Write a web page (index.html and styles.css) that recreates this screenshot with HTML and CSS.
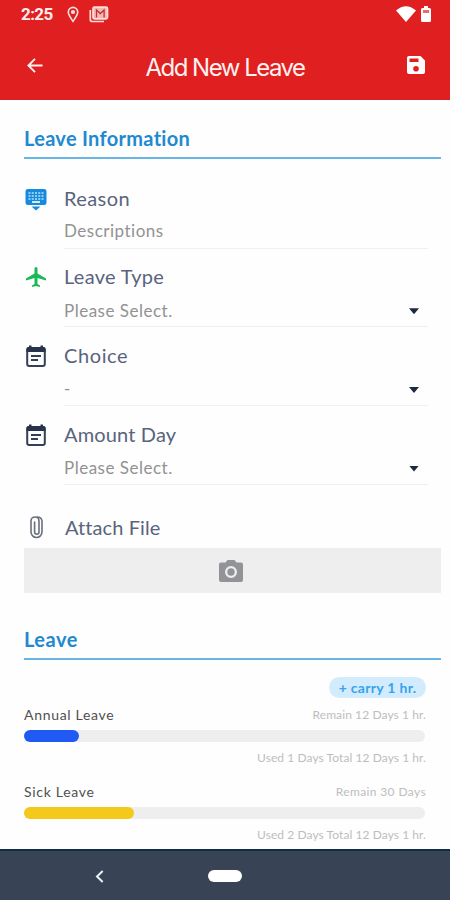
FILE: index.html
```html
<!DOCTYPE html>
<html lang="en">
<head>
<meta charset="utf-8">
<title>Add New Leave</title>
<link rel="stylesheet" href="styles.css">
</head>
<body>
<div class="screen">
  <header class="header">
    <div class="status">
      <span class="time">2:25</span>
      <svg class="pin" width="12" height="17" viewBox="0 0 12 17" fill="none" stroke="#ffe0dc" stroke-width="1.6"><path d="M6 15.4C3.6 12 1.3 9 1.3 6.1a4.7 4.7 0 0 1 9.4 0C10.700 9 8.400 12 6 15.400Z"/><circle cx="6" cy="6" r="1.300" fill="#ffe0dc"/></svg>
      <svg class="mail" width="20" height="17" viewBox="0 0 20 17" fill="none" stroke="#ffdcd8" stroke-width="1.700"><path d="M1.300 4v9.500q0 2 2 2H15"/><rect x="4" y="1.200" width="14.500" height="11.600" rx="1.500" fill="#f9b5b0"/><path d="M7.500 11.500V4l3.800 3.500L15.100 4v7.500" stroke="#b83535" stroke-width="1.300"/></svg>
      <svg class="wifi" width="20" height="16" viewBox="0 0 20 16"><path d="M0 4.500Q10-4 20 4.500L10 16Z" fill="#fff"/></svg>
      <svg class="battery" width="10" height="16" viewBox="0 0 10 16"><path d="M3 0h4v2h1.500q1.500 0 1.500 1.500v11q0 1.500-1.500 1.500h-7Q0 16 0 14.500v-11Q0 2 1.500 2H3Z" fill="#fff"/><path d="M2 4h6v3H2Z" fill="#e96a67"/></svg>
    </div>
    <div class="toolbar">
      <svg class="back" width="16" height="15" viewBox="0 0 16 15" fill="none" stroke="#fff2ee" stroke-width="1.900"><path d="M15.500 7.500H1.600M8 .9 1.400 7.500 8 14.100"/></svg>
      <h1>Add New Leave</h1>
      <svg class="save" width="18" height="18" viewBox="0 0 18 18"><path fill="#fff" fill-rule="evenodd" d="M2 0h11.500L18 4.500V16q0 2-2 2H2q-2 0-2-2V2Q0 0 2 0ZM2.500 2.500v3.500h9V2.500ZM9 10a2.800 2.800 0 1 0 0 5.600A2.800 2.800 0 1 0 9 10Z"/></svg>
    </div>
  </header>

  <main class="content">
    <h2 class="info-title"><span>Leave Information</span></h2>
    <section class="fields">
      <div class="field">
        <svg class="icon" width="24" height="24" viewBox="0 0 24 24"><path d="M4 2h16q2.500 0 2.500 2.500v11Q22.500 18 20 18H4q-2.500 0-2.500-2.500v-11Q1.500 2 4 2ZM7.500 19.500h9L12 23.500Z" fill="#168bdd"/><path d="M4.500 6h15M4.500 9h15M4.500 12h15" stroke="#8dcdf3" stroke-width="2" stroke-dasharray="2 1.250"/><path d="M8 15h8" stroke="#e6f6ff" stroke-width="1.800"/></svg>
        <div class="label reason">Reason</div>
        <div class="value descriptions">Descriptions</div>
      </div>
      <div class="field">
        <svg class="icon" width="24" height="24" viewBox="0 0 24 24"><path fill="#18b957" d="M22 15.500v-2l-8.500-5V3.500a1.500 1.500 0 0 0-3 0v5L2 13.500v2l8.500-2.500v6L8 20.500V22l4-1 4 1v-1.500L13.500 19v-6Z"/></svg>
        <div class="label type">Leave Type</div>
        <div class="value select"><span>Please Select.</span><i class="caret"></i></div>
      </div>
      <div class="field">
        <svg class="icon" width="24" height="24" viewBox="0 0 24 24"><rect x="3.200" y="4" width="17.600" height="18" rx="2" fill="none" stroke="#344057" stroke-width="2"/><path d="M2.500 8V5Q2.500 3 4.500 3H5V1.500h2.500V3h9V1.500H19V3h.5q2 0 2 2v3Z" fill="#27334b"/><path d="M7 12h10M7 16h7" stroke="#344057" stroke-width="1.800"/></svg>
        <div class="label choice">Choice</div>
        <div class="value select"><span>-</span><i class="caret"></i></div>
      </div>
      <div class="field">
        <svg class="icon" width="24" height="24" viewBox="0 0 24 24"><rect x="3.200" y="4" width="17.600" height="18" rx="2" fill="none" stroke="#344057" stroke-width="2"/><path d="M2.500 8V5Q2.500 3 4.500 3H5V1.500h2.500V3h9V1.500H19V3h.5q2 0 2 2v3Z" fill="#27334b"/><path d="M7 12h10M7 16h7" stroke="#344057" stroke-width="1.800"/></svg>
        <div class="label amount">Amount Day</div>
        <div class="value select"><span>Please Select.</span><i class="caret"></i></div>
      </div>
    </section>
    <div class="attach">
      <svg class="clip" width="24" height="26" viewBox="0 0 24 26" fill="none" stroke="#69707d" stroke-width="1.600" stroke-linecap="round"><path d="M18 7v11a5.500 5.500 0 0 1-11 0V7a4 4 0 0 1 8 0v11a2.200 2.200 0 0 1-4.400 0V8M18 7a4.500 4.500 0 0 0-5-4"/></svg>
      <span>Attach File</span>
    </div>
    <div class="upload"><svg width="24" height="22" viewBox="0 0 24 22"><path fill="#929396" fill-rule="evenodd" d="M8.500 0h7l2 2.500H22q2 0 2 2V20q0 2-2 2H2q-2 0-2-2V4.500q0-2 2-2h4.500ZM12 6a6 6 0 1 0 0 12A6 6 0 1 0 12 6Z"/><circle cx="12" cy="12" r="3.700" fill="#929396"/></svg></div>

    <h2 class="leave-title"><span>Leave</span></h2>
    <section class="usage">
      <div class="badge"><span>+ carry 1 hr.</span></div>
      <div class="balance">
        <div class="row"><span class="name annual">Annual Leave</span><span class="note remain">Remain 12 Days 1 hr.</span></div>
        <div class="track"><div class="fill blue"></div></div>
        <div class="used"><span class="note">Used 1 Days Total 12 Days 1 hr.</span></div>
      </div>
      <div class="balance">
        <div class="row"><span class="name">Sick Leave</span><span class="note remain-sick">Remain 30 Days</span></div>
        <div class="track"><div class="fill yellow"></div></div>
        <div class="used"><span class="note">Used 2 Days Total 12 Days 1 hr.</span></div>
      </div>
    </section>
  </main>
  <nav class="nav">
    <svg class="nav-back" width="9" height="13" viewBox="0 0 9 13" fill="none" stroke="#eaf0f8" stroke-width="2"><path d="M7.700 1 2 6.500l5.700 5.500"/></svg>
    <div class="home"></div>
  </nav>
</div>
</body>
</html>
```
FILE: styles.css
```css
* { box-sizing: border-box; }
body { margin: 0; font-family: Lato, "Liberation Sans", sans-serif; font-variant-ligatures: none; background: #fefefe; }
svg { display: block; flex: none; }
h1, h2 { margin: 0; }
.screen { width: 450px; height: 900px; display: flex; flex-direction: column; overflow: hidden; }
.header { height: 100px; flex: none; background: #e01f21; color: #fff; }
.status { height: 28px; display: flex; align-items: center; padding: 0 19px 0 21px; }
.time { font: 700 17px/30px Roboto, sans-serif; width: 46px; letter-spacing: -.6px; color: #ffeeeb; }
.mail { margin-left: 10px; }
.wifi { margin-left: auto; margin-right: 5px; }
.toolbar { height: 72px; display: flex; align-items: center; padding: 2px 25px 0 27px; }
h1 { flex: 1; text-align: center; font: 400 24px/40px Inter, sans-serif; letter-spacing: -1.5px; padding-top: 5px; color: #fff1ee; }
.content { height: 749px; padding: 0 9px 0 24px; }
h2 { font-size: 20px; font-weight: 700; letter-spacing: .3px; color: #2189d0; border-bottom: 2px solid #68b6e6; white-space: nowrap; }
.info-title { height: 58.500px; padding-top: 18px; line-height: 40px; }
.fields { padding-top: 25px; }
.field { height: 78.700px; display: grid; grid-template-columns: 40px 364px; grid-template-rows: 29px 36px; }
.icon { margin-top: 3px; }
.label { font-size: 20px; line-height: 28px; letter-spacing: .3px; color: #59647c; white-space: nowrap; }
.reason { letter-spacing: .4px; }
.choice { letter-spacing: .6px; }
.amount { letter-spacing: .15px; }
.value { grid-column: 2; border-bottom: 1px solid #efeff1; font-size: 17px; line-height: 36px; letter-spacing: .5px; color: #929292; white-space: nowrap; }
.select { display: flex; align-items: center; justify-content: space-between; padding-top: 4px; }
.caret { width: 10px; height: 6px; margin: 1px 9px 0 0; background: #1d2841; clip-path: polygon(0 0, 100% 0, 50% 100%); }
.attach { height: 50px; padding-top: 7px; display: flex; gap: 17px; align-items: center; font-size: 20px; line-height: 30px; letter-spacing: .1px; color: #59647c; }
.upload { height: 45px; background: #eee; display: flex; align-items: center; justify-content: center; padding-right: 3px; }
.leave-title { height: 66.500px; padding-top: 26px; line-height: 40px; letter-spacing: .5px; }
.usage { padding-top: 17px; width: 402px; }
.badge { width: 97px; height: 21px; border-radius: 11px; margin-left: auto; background: #d2ebfd; color: #35a4ef; text-align: center; font-size: 14px; font-weight: 700; letter-spacing: .3px; line-height: 21px; white-space: nowrap; }
.balance { height: 77.500px; padding-top: 4px; }
.row { height: 28px; display: flex; justify-content: space-between; line-height: 25px; }
.name { font-size: 14px; letter-spacing: .7px; color: #505050; }
.note { font-size: 12px; letter-spacing: .07px; color: #bdbdbf; white-space: nowrap; }
.remain { letter-spacing: .1px; }
.remain-sick { letter-spacing: .38px; }
.track { width: 401px; height: 12px; border-radius: 6px; background: #eee; }
.fill { height: 12px; border-radius: 6px; }
.blue { width: 55px; background: #205af5; }
.yellow { width: 110px; background: #f3c91c; }
.used { text-align: right; line-height: 28px; }
.nav { height: 51px; flex: none; display: flex; align-items: center; padding: 1px 0 0 95px; background: #384355; border-top: 2px solid #112b49; }
.home { width: 34px; height: 12px; border-radius: 6px; background: #fff; margin-left: 104px; }
```
